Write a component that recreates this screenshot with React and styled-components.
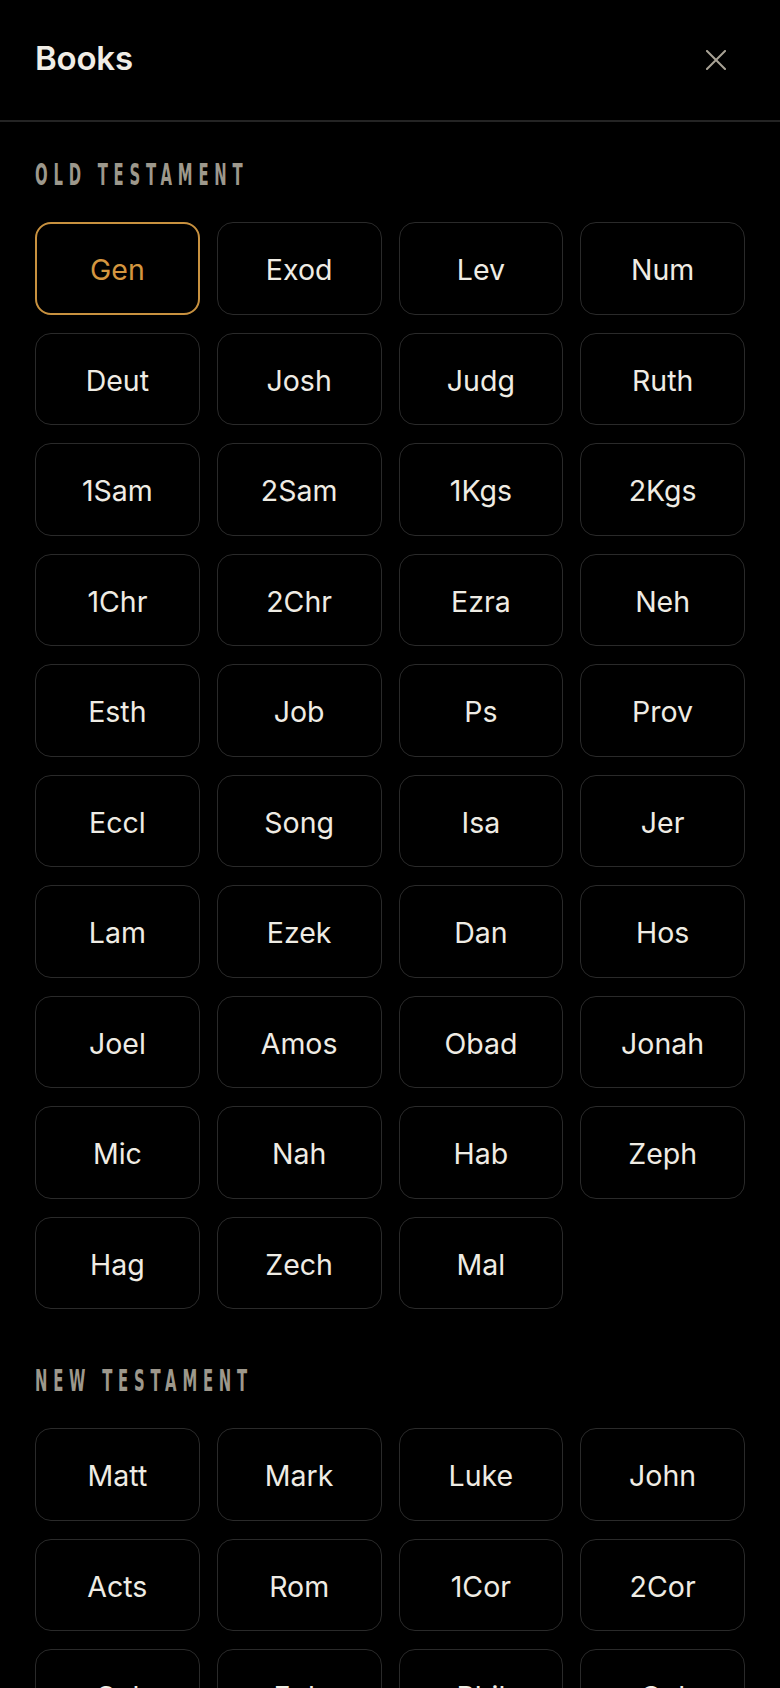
import React, { useState } from "react";
import styled, { createGlobalStyle } from "styled-components";

const GlobalStyle = createGlobalStyle`
  html, body {
    margin: 0;
    padding: 0;
    background: #000;
  }
  body {
    font-family: Inter, "Noto Sans", sans-serif;
    -webkit-font-smoothing: antialiased;
  }
  #root {
    height: 100vh;
  }
`;

const Sheet = styled.div`
  height: 100vh;
  display: flex;
  flex-direction: column;
  background: #000;
  overflow: hidden;
`;

const Header = styled.header`
  flex: none;
  height: 120px;
  display: flex;
  align-items: center;
  justify-content: space-between;
  padding: 0 54px 0 35px;
  border-bottom: 2px solid #242424;
`;

const Title = styled.h1`
  margin: -4px 0 0;
  font-family: Inter, "Noto Sans", sans-serif;
  font-size: 33px;
  font-weight: 600;
  color: #f0ede6;
  letter-spacing: -0.2px;
`;

const CloseButton = styled.button`
  margin-top: 0;
  padding: 0;
  border: 0;
  background: transparent;
  display: flex;
  cursor: pointer;
`;

const Scroll = styled.div`
  flex: 1;
  overflow-y: auto;
  scrollbar-width: none;
  padding: 38px 35px 40px;
  &::-webkit-scrollbar {
    display: none;
  }
`;

const Section = styled.section`
  & + & {
    margin-top: 57px;
  }
`;

const Label = styled.h2`
  margin: 0 0 32px;
  height: 30px;
  line-height: 30px;
  font-family: "DejaVu Sans Condensed", "DejaVu Sans", sans-serif;
  font-weight: 700;
  font-size: 30px;
  color: #9d988c;
  letter-spacing: 10.5px;
  white-space: nowrap;
  transform: scaleX(0.55);
  transform-origin: left center;
`;

const Grid = styled.div`
  display: grid;
  grid-template-columns: repeat(4, 1fr);
  column-gap: 17px;
  row-gap: 18px;
  grid-auto-rows: 92.5px;
`;

const BookButton = styled.button`
  box-sizing: border-box;
  background: transparent;
  border: ${(p) => (p.$active ? "2px solid #c8913f" : "1.5px solid #2a2a2a")};
  border-radius: 16px;
  color: ${(p) => (p.$active ? "#d4963f" : "#efece4")};
  font-family: Inter, "Noto Sans", sans-serif;
  font-size: 28.5px;
  font-weight: 400;
  display: flex;
  align-items: center;
  justify-content: center;
  padding: 3px 0 0;
  cursor: pointer;
`;

const OLD = [
  "Gen", "Exod", "Lev", "Num", "Deut", "Josh", "Judg", "Ruth",
  "1Sam", "2Sam", "1Kgs", "2Kgs", "1Chr", "2Chr", "Ezra", "Neh",
  "Esth", "Job", "Ps", "Prov", "Eccl", "Song", "Isa", "Jer",
  "Lam", "Ezek", "Dan", "Hos", "Joel", "Amos", "Obad", "Jonah",
  "Mic", "Nah", "Hab", "Zeph", "Hag", "Zech", "Mal",
];

const NEW = [
  "Matt", "Mark", "Luke", "John", "Acts", "Rom", "1Cor", "2Cor",
  "Gal", "Eph", "Phil", "Col", "1Thess", "2Thess", "1Tim", "2Tim",
  "Titus", "Phlm", "Heb", "Jas", "1Pet", "2Pet", "1John", "2John",
  "3John", "Jude", "Rev",
];

function CloseIcon() {
  return (
    <svg width="20" height="20" viewBox="0 0 20 20" fill="none">
      <path d="M1 1L19 19M19 1L1 19" stroke="#a8a295" strokeWidth="2" strokeLinecap="square" />
    </svg>
  );
}

function BookSection({ title, books, selected, onSelect }) {
  return (
    <Section>
      <Label>{title}</Label>
      <Grid>
        {books.map((b) => (
          <BookButton key={b} $active={b === selected} onClick={() => onSelect(b)}>
            {b}
          </BookButton>
        ))}
      </Grid>
    </Section>
  );
}

export default function App() {
  const [selected, setSelected] = useState("Gen");
  return (
    <>
      <GlobalStyle />
      <Sheet>
        <Header>
          <Title>Books</Title>
          <CloseButton aria-label="Close">
            <CloseIcon />
          </CloseButton>
        </Header>
        <Scroll>
          <BookSection title="OLD TESTAMENT" books={OLD} selected={selected} onSelect={setSelected} />
          <BookSection title="NEW TESTAMENT" books={NEW} selected={selected} onSelect={setSelected} />
        </Scroll>
      </Sheet>
    </>
  );
}
